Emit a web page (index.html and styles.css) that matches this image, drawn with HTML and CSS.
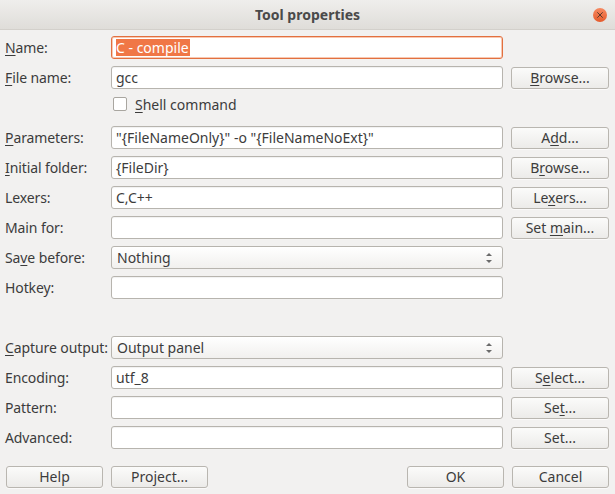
FILE: index.html
```html
<!DOCTYPE html>
<html>
<head>
<meta charset="utf-8">
<title>Tool properties</title>
<link rel="stylesheet" href="styles.css">
</head>
<body>
<div class="window">
  <div class="titlebar">
    <span class="title">Tool properties</span>
    <span class="close">
      <svg width="14" height="14" viewBox="0 0 14 14">
        <defs>
          <linearGradient id="cg" x1="0" y1="0" x2="0" y2="1">
            <stop offset="0" stop-color="#f68a62"/>
            <stop offset="1" stop-color="#e55a2b"/>
          </linearGradient>
        </defs>
        <circle cx="7" cy="7" r="7" fill="url(#cg)"/>
        <path d="M4.6 4.6 L9.4 9.4 M9.4 4.6 L4.6 9.4" stroke="#5a3a2c" stroke-width="1" stroke-linecap="round"/>
      </svg>
    </span>
  </div>

  <div class="form">
    <label class="lbl"><u>N</u>ame:</label>
    <div class="field focus"><span class="sel">C - compile</span></div>
    <div></div>

    <label class="lbl"><u>F</u>ile name:</label>
    <div class="field">gcc</div>
    <button class="btn"><u>B</u>rowse...</button>

    <div></div>
    <div class="check"><span class="box"></span><span><u>S</u>hell command</span></div>
    <div></div>

    <label class="lbl"><u>P</u>arameters:</label>
    <div class="field">"{FileNameOnly}" -o "{FileNameNoExt}"</div>
    <button class="btn">A<u>d</u>d...</button>

    <label class="lbl"><u>I</u>nitial folder:</label>
    <div class="field">{FileDir}</div>
    <button class="btn">B<u>r</u>owse...</button>

    <label class="lbl">Lexers:</label>
    <div class="field">C,C++</div>
    <button class="btn">Le<u>x</u>ers...</button>

    <label class="lbl">Main for:</label>
    <div class="field"></div>
    <button class="btn">Set <u>m</u>ain...</button>

    <label class="lbl">Sa<u>v</u>e before:</label>
    <div class="combo"><span>Nothing</span><span class="spin"></span></div>
    <div></div>

    <label class="lbl">Hotkey:</label>
    <div class="field"></div>
    <div></div>

    <div class="blank"></div>
    <div></div>
    <div></div>

    <label class="lbl"><u>C</u>apture output:</label>
    <div class="combo"><span>Output panel</span><span class="spin"></span></div>
    <div></div>

    <label class="lbl">Encoding:</label>
    <div class="field">utf_8</div>
    <button class="btn">S<u>e</u>lect...</button>

    <label class="lbl">Pattern:</label>
    <div class="field"></div>
    <button class="btn">Se<u>t</u>...</button>

    <label class="lbl">Advanced:</label>
    <div class="field"></div>
    <button class="btn">Set...</button>
  </div>

  <div class="actions">
    <button class="btn wide">Help</button>
    <button class="btn wide">Project...</button>
    <span class="spacer"></span>
    <button class="btn wide">OK</button>
    <button class="btn wide">Cancel</button>
  </div>
</div>
</body>
</html>
```

FILE: styles.css
```css
* { box-sizing: border-box; }
html, body {
  margin: 0;
  padding: 0;
  background: #f2f1f0;
}
body {
  font-family: "Noto Sans", "Open Sans", sans-serif;
  font-size: 14px;
  color: #3c3c3c;
}
.window {
  width: 615px;
  height: 494px;
  background: #f2f1f0;
  overflow: hidden;
}
.titlebar {
  height: 30px;
  position: relative;
  display: flex;
  align-items: center;
  justify-content: center;
  background: linear-gradient(#efeeec, #dfddd9);
  border-bottom: 1px solid #d3d0cb;
}
.title {
  font-weight: bold;
  font-size: 14px;
  color: #4a4a4a;
}
.close {
  position: absolute;
  right: 8px;
  top: 8px;
  width: 14px;
  height: 14px;
  display: block;
}
.close svg { display: block; }

.form {
  display: grid;
  grid-template-columns: 106px 392px 106px;
  grid-auto-rows: 23px;
  row-gap: 7px;
  padding: 6px 0 0 5px;
}
.lbl {
  display: flex;
  align-items: center;
  white-space: nowrap;
  overflow: visible;
  letter-spacing: -0.1px;
}
u { text-decoration: underline; text-underline-offset: 2px; }
.field {
  background: #fff;
  border: 1px solid #b7b4ae;
  border-radius: 3px;
  display: flex;
  align-items: center;
  padding-left: 4px;
  white-space: nowrap;
  overflow: hidden;
  box-shadow: inset 0 1px 1px rgba(0,0,0,0.06);
}
.field.focus {
  border-color: #e2703f;
  box-shadow: inset 0 0 0 1px #f8c8b2;
}
.sel {
  background: #f07746;
  color: #fff;
  line-height: 17px;
  padding: 0 1px 0 0;
}
.combo {
  border: 1px solid #b7b4ae;
  border-radius: 3px;
  background: linear-gradient(#ffffff, #f1f0ee);
  display: flex;
  align-items: center;
  justify-content: space-between;
  padding: 0 10px 0 5px;
}
.spin {
  width: 6px;
  height: 12px;
  position: relative;
}
.spin::before, .spin::after {
  content: "";
  position: absolute;
  left: 0;
  border-left: 3px solid transparent;
  border-right: 3px solid transparent;
}
.spin::before { top: 1px; border-bottom: 3px solid #6a6a6a; }
.spin::after { bottom: 1px; border-top: 3px solid #6a6a6a; }

.btn {
  display: block;
  margin-left: 8px;
  width: 98px;
  height: 22px;
  margin-top: 1px;
  font-family: inherit;
  font-size: 14px;
  line-height: 20px;
  text-align: center;
  white-space: nowrap;
  color: #3c3c3c;
  border: 1px solid #b9b6b0;
  border-radius: 3px;
  background: linear-gradient(#fbfbfa, #ecebe9);
  padding: 0;
  box-shadow: 0 1px 0 rgba(255,255,255,0.6);
}
.check {
  display: flex;
  align-items: flex-start;
  gap: 8px;
  padding-left: 2px;
  padding-top: 0px;
  line-height: 17px;
}
.box {
  width: 14px;
  height: 14px;
  margin-top: 1px;
  background: #fff;
  border: 1px solid #a9a6a0;
  border-radius: 2px;
}
.actions {
  display: flex;
  align-items: center;
  padding: 0 6px 0 6px;
  margin-top: 16px;
  gap: 8px;
}
.actions .btn {
  margin-left: 0;
  width: 97px;
}
.spacer { flex: 1; }
```
